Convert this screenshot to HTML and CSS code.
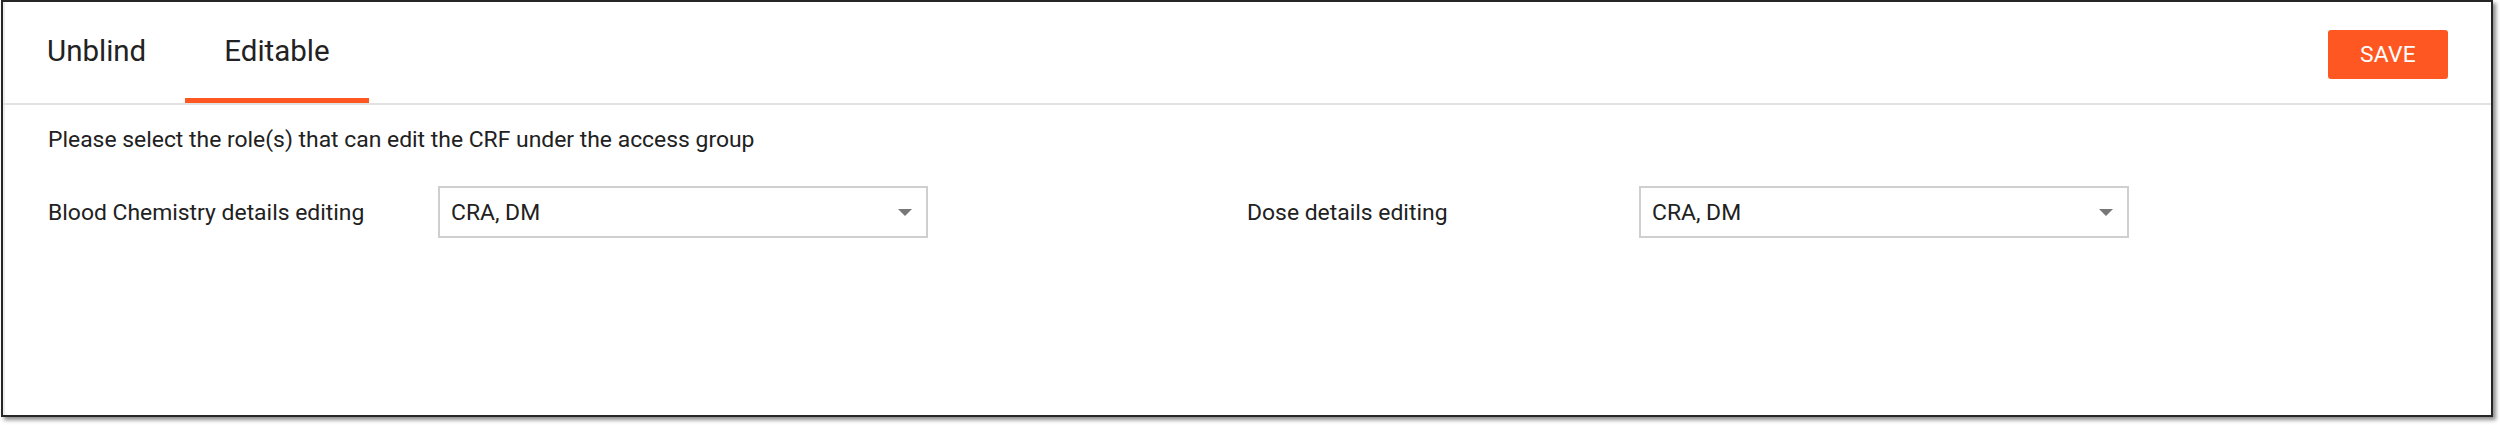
FILE: index.html
```html
<!DOCTYPE html>
<html lang="en">
<head>
<meta charset="utf-8">
<title>Access group</title>
<link rel="stylesheet" href="styles.css">
</head>
<body>
<div class="frame">
  <div class="tabbar">
    <div class="tab">Unblind</div>
    <div class="tab active">Editable</div>
    <button class="save">SAVE</button>
  </div>
  <div class="content">
    <p class="intro">Please select the role(s) that can edit the CRF under the access group</p>
    <div class="fields">
      <div class="field">
        <span class="label">Blood Chemistry details editing</span>
        <div class="select"><span class="value">CRA, DM</span><span class="arrow"></span></div>
      </div>
      <div class="field">
        <span class="label">Dose details editing</span>
        <div class="select"><span class="value">CRA, DM</span><span class="arrow"></span></div>
      </div>
    </div>
  </div>
</div>
</body>
</html>
```

FILE: styles.css
```css
* { box-sizing: border-box; }
html, body { margin: 0; padding: 0; background: #ffffff; }
body {
  font-family: Roboto, "Liberation Sans", Arial, sans-serif;
  color: #212121;
  width: 2500px;
  height: 425px;
  overflow: hidden;
}
.frame {
  margin-left: 1px;
  width: 2492px;
  height: 417px;
  border: 2px solid #262626;
  background: #ffffff;
  box-shadow: 3px 3px 4px rgba(0, 0, 0, 0.45), inset 2px 0 0 #ececec;
  display: flex;
  flex-direction: column;
}
.tabbar {
  display: flex;
  align-items: stretch;
  height: 103px;
  padding: 0 43px 0 5px;
  border-bottom: 2px solid #e2e2e2;
  flex-shrink: 0;
}
.tab {
  display: flex;
  align-items: center;
  padding: 0 39px;
  font-size: 29.5px;
  color: #222222;
  border-bottom: 5px solid transparent;
  padding-top: 2px;
}
.tab.active { border-bottom-color: #ff5722; }
.save {
  margin-left: auto;
  align-self: center;
  margin-top: 4px;
  width: 120px;
  height: 49px;
  border: none;
  border-radius: 3px;
  background: #ff5722;
  color: #ffffff;
  font-family: Roboto, "Liberation Sans", Arial, sans-serif;
  font-size: 22.8px;
  letter-spacing: 0.3px;
  padding: 0;
}
.content {
  padding: 0 0 0 45px;
  font-size: 22.9px;
}
.intro {
  margin: 22px 0 0 0;
  line-height: 26px;
}
.fields {
  display: flex;
  margin-top: 33px;
}
.field {
  display: flex;
  align-items: center;
  width: 1199px;
}
.label {
  width: 390px;
  flex-shrink: 0;
  padding-top: 1px;
}
.field + .field .label { width: 392px; }
.select {
  width: 490px;
  height: 52px;
  border: 2px solid #cfcfcf;
  display: flex;
  align-items: center;
  padding: 0 14px 0 11px;
}
.value { flex: 1; }
.arrow {
  width: 0;
  height: 0;
  border-left: 7px solid transparent;
  border-right: 7px solid transparent;
  border-top: 7px solid #777777;
}
```
